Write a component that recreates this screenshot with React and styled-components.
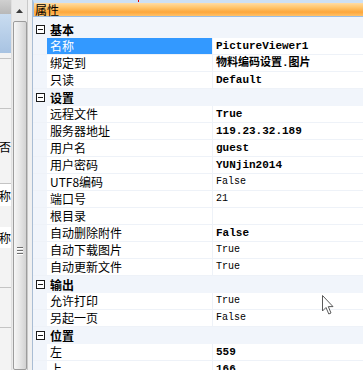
import React from "react";
import styled, { createGlobalStyle } from "styled-components";

const GlobalStyle = createGlobalStyle`
  html, body {
    margin: 0;
    padding: 0;
    overflow: hidden;
    background: #f0f0f0;
  }
`;

const sections = [
  {
    title: "基本",
    rows: [
      { name: "名称", value: "PictureViewer1", bold: true, selected: true },
      { name: "绑定到", value: "物料编码设置.图片", bold: true },
      { name: "只读", value: "Default", bold: true },
    ],
  },
  {
    title: "设置",
    rows: [
      { name: "远程文件", value: "True", bold: true },
      { name: "服务器地址", value: "119.23.32.189", bold: true },
      { name: "用户名", value: "guest", bold: true },
      { name: "用户密码", value: "YUNjin2014", bold: true },
      { name: "UTF8编码", value: "False" },
      { name: "端口号", value: "21" },
      { name: "根目录", value: "" },
      { name: "自动删除附件", value: "False", bold: true },
      { name: "自动下载图片", value: "True" },
      { name: "自动更新文件", value: "True" },
    ],
  },
  {
    title: "输出",
    rows: [
      { name: "允许打印", value: "True" },
      { name: "另起一页", value: "False" },
    ],
  },
  {
    title: "位置",
    rows: [
      { name: "左", value: "559", bold: true },
      { name: "上", value: "166", bold: true },
    ],
  },
];

const leftSegments = [
  { h: 14, kind: "head" },
  { h: 39, kind: "sel" },
  { h: 6, line: true },
  { h: 50, line: true },
  { h: 75, line: true, text: "否" },
  { h: 22, kind: "cell", text: "称" },
  { h: 21 },
  { h: 21, kind: "cell", text: "称" },
  { h: 40, line: true },
  { h: 40, line: true },
  { h: 60 },
];

const Page = styled.div`
  position: relative;
  display: flex;
  width: 363px;
  height: 370px;
  overflow: hidden;
  font-family: "Noto Sans CJK SC", "Liberation Sans", sans-serif;
`;

const LeftList = styled.div`
  width: 11px;
  display: flex;
  flex-direction: column;
  background: #f3f3f3;
  overflow: hidden;
`;

const Segment = styled.div`
  height: ${(p) => p.h}px;
  flex: none;
  box-sizing: border-box;
  display: flex;
  align-items: center;
  justify-content: flex-end;
  overflow: hidden;
  font-size: 12px;
  color: #000;
  background: ${(p) =>
    p.kind === "head"
      ? "linear-gradient(#d0d0d0, #b8b8b8)"
      : p.kind === "sel"
      ? "linear-gradient(#c9dcf0, #a8c3e2)"
      : p.kind === "cell"
      ? "#ffffff"
      : "transparent"};
  border-bottom: ${(p) => (p.line ? "1px solid #c4c4c4" : "none")};
  white-space: nowrap;
`;

const ScrollBar = styled.div`
  width: 16px;
  display: flex;
  flex-direction: column;
  align-items: center;
  background: #ebebeb;
  border-left: 1px solid #e0e0e0;
  box-sizing: border-box;
`;

const ArrowButton = styled.div`
  height: 21px;
  width: 100%;
  display: flex;
  align-items: center;
  justify-content: center;
  flex: none;
`;

const Thumb = styled.div`
  flex: 1;
  width: 14px;
  box-sizing: border-box;
  border: 1px solid #9c9c9c;
  border-radius: 2px;
  background: linear-gradient(90deg, #f6f6f6, #e6e6e6 50%, #d2d2d2);
  display: flex;
  flex-direction: column;
  align-items: center;
  padding-top: 225px;
  gap: 2px;
`;

const Grip = styled.span`
  width: 6px;
  height: 1px;
  background: #6e6e6e;
  box-shadow: 0 1px 0 #ffffff;
`;

const Splitter = styled.div`
  width: 6px;
  box-sizing: border-box;
  background: #f0f0f0;
  border-left: 1px solid #c9c9c9;
  border-right: 1px solid #a9bdd4;
`;

const Grid = styled.div`
  flex: 1;
  display: flex;
  flex-direction: column;
  background: #f1f5fb;
`;

const Header = styled.div`
  position: relative;
  height: 17px;
  box-sizing: border-box;
  border-top: 3px solid #cde0f4;
  border-bottom: 1px solid #9dbfe4;
  border-left: 1px solid #9dbfe4;
  background: linear-gradient(#ffdca4, #ffc56c 35%, #fda73c 70%, #ffc26a);
  display: flex;
  align-items: center;
  padding-left: 1px;
  font-size: 12px;
  line-height: 13px;
  color: #000;
`;

const RedMark = styled.span`
  position: absolute;
  left: 104px;
  top: -3px;
  width: 1px;
  height: 2px;
  background: #e00000;
`;

const Rule = styled.div`
  height: 1px;
  margin: 3px 0 1px;
  background: #a6a6a6;
`;

const Row = styled.div`
  display: grid;
  grid-template-columns: 14px 166px 1fr;
  height: 17px;
  box-sizing: border-box;
  border-bottom: ${(p) => (p.category ? "none" : "1px solid #eef2f8")};
  background: ${(p) => (p.category ? "#f1f5fb" : "transparent")};
  flex: none;
`;

const Gutter = styled.div`
  display: flex;
  align-items: center;
  justify-content: center;
  background: #f1f5fb;
`;

const Toggle = styled.span`
  width: 9px;
  height: 9px;
  box-sizing: border-box;
  border: 1px solid #1a1a1a;
  display: flex;
  align-items: center;
  justify-content: center;
  background: #fff;
  margin-left: 1px;

  &::after {
    content: "";
    width: 5px;
    height: 1px;
    background: #1a1a1a;
  }
`;

const CategoryName = styled.div`
  grid-column: 2 / 4;
  font-size: 12px;
  font-weight: bold;
  line-height: 17px;
  padding-left: 3px;
  color: #000;
`;

const NameCell = styled.div`
  font-size: 12px;
  line-height: 16px;
  padding-left: 3px;
  background: ${(p) => (p.selected ? "#3399ff" : "#ffffff")};
  color: ${(p) => (p.selected ? "#ffffff" : "#000000")};
  border-right: 1px solid #eef2f8;
  white-space: nowrap;
  overflow: hidden;
`;

const ValueCell = styled.div`
  background: #ffffff;
  padding-left: 3px;
  font-family: "Liberation Mono", "Noto Sans CJK SC", monospace;
  font-size: ${(p) => (p.bold ? "11px" : "10px")};
  font-weight: ${(p) => (p.bold ? "bold" : "normal")};
  line-height: 16px;
  color: #000;
  white-space: nowrap;
  overflow: hidden;
`;

const Cursor = styled.svg`
  position: absolute;
  left: 322px;
  top: 295px;
`;

export default function App() {
  return (
    <>
      <GlobalStyle />
      <Page>
        <LeftList>
          {leftSegments.map((s, i) => (
            <Segment key={i} h={s.h} kind={s.kind} line={s.line}>
              {s.text}
            </Segment>
          ))}
        </LeftList>
        <ScrollBar>
          <ArrowButton>
            <svg width="7" height="4" viewBox="0 0 7 4">
              <path d="M0 4 L3.5 0 L7 4 Z" fill="#3a3a3a" />
            </svg>
          </ArrowButton>
          <Thumb>
            <Grip />
            <Grip />
            <Grip />
          </Thumb>
        </ScrollBar>
        <Splitter />
        <Grid>
          <Header>
            <RedMark />
            属性
          </Header>
          <Rule />
          {sections.map((sec) => (
            <React.Fragment key={sec.title}>
              <Row category>
                <Gutter>
                  <Toggle />
                </Gutter>
                <CategoryName>{sec.title}</CategoryName>
              </Row>
              {sec.rows.map((r) => (
                <Row key={r.name}>
                  <Gutter />
                  <NameCell selected={r.selected}>{r.name}</NameCell>
                  <ValueCell bold={r.bold}>{r.value}</ValueCell>
                </Row>
              ))}
            </React.Fragment>
          ))}
        </Grid>
        <Cursor width="13" height="21" viewBox="0 0 13 21">
          <path
            d="M0.5 0.5 L0.5 16 L4 12.5 L6.8 19 L9 18 L6.3 11.6 L11 11.6 Z"
            fill="#ffffff"
            stroke="#5a5a5a"
            strokeWidth="1"
            strokeLinejoin="round"
          />
        </Cursor>
      </Page>
    </>
  );
}
